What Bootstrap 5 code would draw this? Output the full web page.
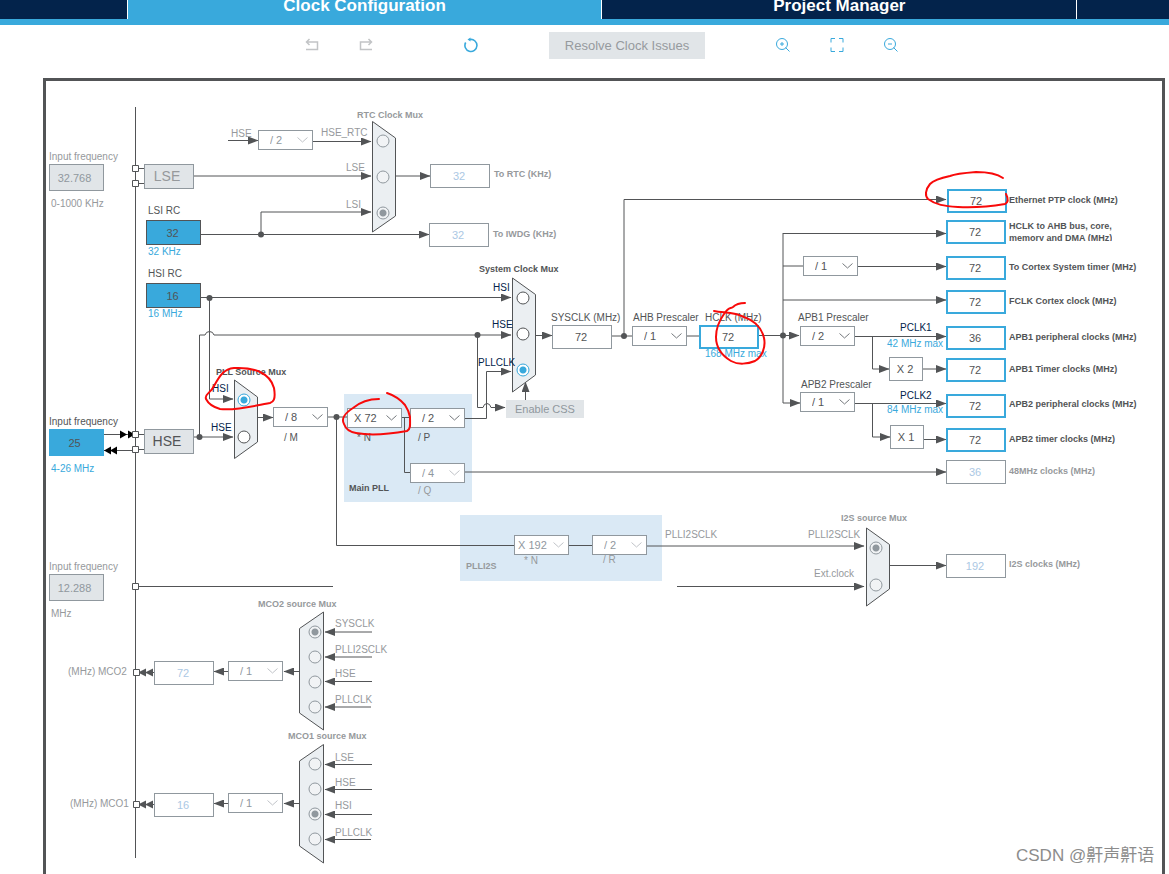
<!DOCTYPE html>
<html lang="en">
<head>
<meta charset="utf-8">
<meta name="viewport" content="width=device-width, initial-scale=1">
<title>Clock Configuration</title>
<link href="https://cdn.jsdelivr.net/npm/bootstrap@5.3.0/dist/css/bootstrap.min.css" rel="stylesheet">
<script src="https://cdn.jsdelivr.net/npm/bootstrap@5.3.0/dist/js/bootstrap.bundle.min.js"></script>
<style>
  :root { --sky:#39a9dc; --navy:#03234b; --ink:#525456; --edge:#90989e; --mist:#e1e5e8; --soft:#96999c; }
  body { font-family:"Liberation Sans",Arial,sans-serif; color:var(--ink); background:#fff; }
  .tabbar { height:25px; border-bottom:6px solid var(--sky); background:var(--navy); }
  .tabbar .tab { flex:475 1 0; border-right:1px solid #fff; color:#fff; font-size:17px; font-weight:700; line-height:12px; text-align:center; text-decoration:none; }
  .tabbar .tab-first { flex-grow:127; }
  .tabbar .tab-last { flex-grow:92; border-right:0; }
  .tabbar .tab.current { background:var(--sky); }
  .tools { height:53px; gap:51px; padding:7px 0 0 34px; }
  .tool { width:54px; height:26px; padding:0; border:0; background:none; color:var(--sky); display:flex; align-items:center; justify-content:center; }
  .tool:disabled { color:#c2c4c6; }
  .resolve { width:156px; height:27px; border:0; background:var(--mist); color:#969a9e; font-size:13px; line-height:27px; padding:0; }
  .frame { margin:0 4px 0 43px; border:3px solid var(--ink); border-bottom:0; overflow:hidden; }
  /* Canvas: every node carries its own place as --x / --y */
  .sheet, .ink { position:absolute; left:0; top:0; }
  .ink { pointer-events:none; }
  .at { position:absolute; left:calc((var(--x) - 46) * 1px); top:calc((var(--y) - 81) * 1px); }
  .cap { font-size:10px; line-height:12px; white-space:nowrap; color:var(--ink); }
  .bold { font-weight:700; font-size:9px; }
  .off { color:var(--soft); }
  .pin { color:var(--navy); }
  .lim { color:var(--sky); }
  .two { height:21px; overflow:hidden; }
  .val { width:60px; height:24px; padding:0 2px 0 0; border:1px solid var(--edge); border-radius:0; background:#fff; color:var(--ink); font-size:11px; line-height:22px; text-align:center; }
  .val.on { border:2px solid var(--sky); line-height:20px; }
  .val:disabled { color:#abc8e4; opacity:1; }
  .val.src { width:55px; height:25px; background:var(--sky); border-color:var(--ink); }
  .val.freq { width:55px; height:27px; padding-right:4px; }
  .val.freq.live { background:var(--sky); border-color:var(--sky); }
  .val.freq:disabled { background:var(--mist); border-color:var(--edge); color:#90989e; }
  .osc { width:50px; height:25px; padding:0 4px 0 0; border:1px solid var(--edge); background:var(--mist); font-size:14px; line-height:23px; text-align:center; }
  .mult { width:34px; height:24px; padding-right:2px; border:1px solid var(--edge); background:#fff; font-size:11px; line-height:22px; text-align:center; }
  .pick { width:55px; height:20px; padding:0 0 0 11px; border:1px solid var(--edge); border-radius:0; color:var(--ink); font-size:11px; line-height:18px; appearance:none;
    background:#fff url("data:image/svg+xml,%3Csvg xmlns='http://www.w3.org/2000/svg' width='11' height='6'%3E%3Cpath d='M.5.5 5.5 5 10.5.5' fill='none' stroke='%2375797d'/%3E%3C/svg%3E") no-repeat right 4px center; }
  .pick.wide { padding-left:6px; }
  .pick.wider { padding-left:3px; }
  .pick:disabled { opacity:1; color:#90989e; background-image:url("data:image/svg+xml,%3Csvg xmlns='http://www.w3.org/2000/svg' width='11' height='6'%3E%3Cpath d='M.5.5 5.5 5 10.5.5' fill='none' stroke='%23c0c4c8'/%3E%3C/svg%3E"); }
  .dial { width:13px; height:13px; margin:0; appearance:none; border:1px solid var(--ink); border-radius:50%; background:#fff; transform:translate(-50%,-50%); }
  .dial:checked { border-color:var(--sky); background:radial-gradient(circle,var(--sky) 3px,#fff 4px); }
  .dial:disabled { border-color:var(--edge); background:#f1f3f5; }
  .dial:disabled:checked { background:radial-gradient(circle,var(--edge) 3px,#f1f3f5 4px); }
  .css { width:78px; height:18px; padding:0; border:0; background:var(--mist); color:#90989e; font-size:11px; line-height:18px; }
  .credit { font:17px/24px "Liberation Sans","Noto Sans CJK SC",sans-serif; color:#8c8c8c; white-space:nowrap; }
</style>
</head>
<body class="d-flex flex-column min-vh-100">
<nav class="tabbar d-flex overflow-hidden">
  <span class="tab tab-first"></span>
  <a class="tab current" href="#clock">Clock Configuration</a>
  <a class="tab" href="#project">Project Manager</a>
  <span class="tab tab-last"></span>
</nav>
<div class="tools d-flex justify-content-center align-items-start">
  <div class="d-flex">
    <button class="tool" type="button" disabled><svg width="14" height="14" fill="none" stroke="currentColor" stroke-width="1.5"><path d="M1 11.500h11.500V4H2M4.500 1 1.500 4l3 3"/></svg></button>
    <button class="tool" type="button" disabled><svg width="14" height="14" fill="none" stroke="currentColor" stroke-width="1.5"><path d="M13 11.500H1.500V4H12M9.500 1 12.500 4 9.500 7"/></svg></button>
  </div>
  <button class="tool" type="button"><svg width="14" height="16" fill="none" stroke="currentColor" stroke-width="1.600"><path d="M1.700 5.500A6 6 0 1 0 6 2.500"/><path d="M3.500 2.500 6.500.500V4.500Z" fill="currentColor" stroke="none"/></svg></button>
  <button class="resolve" type="button" disabled>Resolve Clock Issues</button>
  <div class="d-flex">
    <button class="tool" type="button"><svg width="14" height="16" fill="none" stroke="currentColor"><circle cx="6" cy="7" r="5.500"/><path d="m9.500 10.500 4 4M4 7h4M6 5v4"/></svg></button>
    <button class="tool" type="button"><svg width="14" height="16" fill="none" stroke="currentColor"><path d="M1 5.500V1.500h4M9 1.500h4v4M13 10.500v4H9M5 14.500H1v-4"/></svg></button>
    <button class="tool" type="button"><svg width="14" height="16" fill="none" stroke="currentColor"><circle cx="6" cy="7" r="5.500"/><path d="m9.500 10.500 4 4M4 7h4"/></svg></button>
  </div>
</div>

<main class="frame position-relative flex-grow-1" id="clock">
<svg class="sheet" width="1116" height="793" viewBox="46 81 1116 793" fill="none" stroke="#525456">
  <defs>
    <marker id="arr" markerUnits="userSpaceOnUse" markerWidth="11" markerHeight="8" refX="10" refY="4" orient="auto"><path d="M0 0 10.500 4 0 8Z" fill="#525456" stroke="none"/></marker>
  </defs>
  <g fill="#dae9f5" stroke="none"><path d="M344 394h128v108H344zM460 515h202v66H460z"/></g>
  <path d="M135.500 107V858M139 168.500h5M139 183.500h5M139 434.500h5M139 449.500h5M139 586.500H333M104 434.500h31M104 450.500h31
    M209.500 298V399M336.500 417V545.500H514M569 545.500h23M328 417h19M402 417.500h8M404.500 417V472.500H410M612 336h20M687 336h12M783 336V233M783 266h20"/>
  <g marker-end="url(#arr)">
    <path d="M228 140.500H258"/><path d="M313 141.500H371"/><path d="M194 176H371"/><path d="M201 234.500H429"/><path d="M261 234V212H371"/><path d="M396 176H430"/>
    <path d="M201 297.500H511"/><path d="M209.500 298V399H233"/><path d="M194 437H233"/>
    <path d="M199.500 437V335H205Q206 331.500 209.500 331.500T214 335H511"/>
    <path d="M477.500 335V407.500H483Q484 403.500 487 403.500T491 407.500H505"/>
    <path d="M258 417.500H273"/><path d="M465 418.500H486.500V371.500H511"/><path d="M465 472H946"/><path d="M647 546H864"/>
    <path d="M536 335.500H552"/><path d="M624 336V199.500H946"/><path d="M525.500 400V382"/><path d="M759 335.500H799"/>
    <path d="M783 233.500H946"/><path d="M858 266.500H946"/><path d="M783 300H946"/><path d="M783 335V403H800"/>
    <path d="M855 336.500H946"/><path d="M872.500 337V369H889"/><path d="M923 369H946"/><path d="M855 403.500H946"/><path d="M872.500 403V437H890"/><path d="M924 439.500H946"/>
    <path d="M677 586.500H864"/><path d="M889 565.500H946"/>
    <path d="M299 671.500H284"/><path d="M228 671.500H214"/><path d="M299 803.500H284"/><path d="M228 803.500H214"/>
  </g>
  <g fill="#525456" stroke="none">
    <circle cx="261" cy="234.500" r="3"/><circle cx="209.500" cy="298" r="3"/><circle cx="199.500" cy="437" r="3"/><circle cx="477.500" cy="335" r="3"/><circle cx="336.500" cy="417" r="3"/><circle cx="624" cy="336" r="3"/><circle cx="783" cy="335.500" r="3"/>
    <path d="M138 672.500l8-4v8zM145 672.500l8-4v8zM138 804.500l8-4v8zM145 804.500l8-4v8z"/>
    <path fill="#000" d="M127 434.500l-7-4v8zM135 434.500l-7-4v8zM104 450.500l7-4v8zM110 450.500l7-4v8z"/>
  </g>
  <path d="M146 672.500h8M146 804.500h8"/>
  <path fill="#fff" d="M132.500 165.500h6v6h-6zM132.500 180.500h6v6h-6zM132.500 431.500h6v6h-6zM132.500 446.500h6v6h-6zM132.500 583.500h6v6h-6zM133.500 669.500h6v6h-6zM133.500 801.500h6v6h-6z"/>
  <path fill="#ebeff2" d="M372.500 121.500l23 16.500v78l-23 16zM512.500 278l23 16.500V375l-23 17zM234.500 380l23 17v45l-23 16.500zM866.500 528l23 16.500V589l-23 17zM323.500 612l-24 16.500V713l24 17zM323.500 744.500l-24 16.500V846l24 17z"/>
  <g marker-end="url(#arr)">
    <path d="M372 632H325"/><path d="M372 657H325"/><path d="M372 681.500H325"/><path d="M371 707H325"/>
    <path d="M372 764.500H325"/><path d="M372 789.500H325"/><path d="M372 814.500H325"/><path d="M371 839.500H325"/>
  </g>
</svg>

<!-- RTC branch and low-speed sources -->
<label class="at cap off" for="f1" style="--x:49;--y:151">Input frequency</label>
<input class="at val freq" id="f1" value="32.768" disabled style="--x:49;--y:164">
<span class="at cap off" style="--x:51;--y:198">0-1000 KHz</span>
<div class="at osc off" style="--x:144;--y:164">LSE</div>
<label class="at cap" for="lsi" style="--x:148;--y:205">LSI RC</label>
<input class="at val src" id="lsi" value="32" readonly style="--x:146;--y:220">
<span class="at cap lim" style="--x:148;--y:246">32 KHz</span>
<label class="at cap" for="hsi" style="--x:148;--y:268">HSI RC</label>
<input class="at val src" id="hsi" value="16" readonly style="--x:146;--y:283">
<span class="at cap lim" style="--x:148;--y:308">16 MHz</span>
<label class="at cap off" for="d1" style="--x:231;--y:128">HSE</label>
<select class="at pick" id="d1" disabled style="--x:258;--y:130"><option>/ 2</option></select>
<span class="at cap bold off" style="--x:357;--y:109">RTC Clock Mux</span>
<label class="at cap off" for="r1" style="--x:321;--y:127">HSE_RTC</label>
<label class="at cap off" for="r2" style="--x:346;--y:162">LSE</label>
<label class="at cap off" for="r3" style="--x:346;--y:199">LSI</label>
<input class="at dial" type="radio" name="rtc" id="r1" disabled style="--x:383;--y:141">
<input class="at dial" type="radio" name="rtc" id="r2" disabled style="--x:383;--y:177">
<input class="at dial" type="radio" name="rtc" id="r3" disabled checked style="--x:383;--y:213">
<input class="at val" id="o1" value="32" disabled style="--x:430;--y:164">
<label class="at cap bold off" for="o1" style="--x:494;--y:168">To RTC (KHz)</label>
<input class="at val" id="o2" value="32" disabled style="--x:429;--y:223">
<label class="at cap bold off" for="o2" style="--x:493;--y:228">To IWDG (KHz)</label>

<!-- System clock mux -->
<span class="at cap bold" style="--x:479;--y:263">System Clock Mux</span>
<label class="at cap pin" for="s1" style="--x:493;--y:282">HSI</label>
<label class="at cap pin" for="s2" style="--x:492;--y:319">HSE</label>
<label class="at cap pin" for="s3" style="--x:478;--y:357">PLLCLK</label>
<input class="at dial" type="radio" name="sys" id="s1" style="--x:523;--y:298">
<input class="at dial" type="radio" name="sys" id="s2" style="--x:523;--y:334">
<input class="at dial" type="radio" name="sys" id="s3" checked style="--x:523;--y:370">
<button class="at css" type="button" disabled style="--x:506;--y:400">Enable CSS</button>
<label class="at cap" for="sysclk" style="--x:551;--y:312">SYSCLK (MHz)</label>
<input class="at val" id="sysclk" value="72" readonly style="--x:552;--y:325">
<label class="at cap" for="ahb" style="--x:633;--y:312">AHB Prescaler</label>
<select class="at pick" id="ahb" style="--x:632;--y:326"><option>/ 1</option></select>
<label class="at cap" for="hclk" style="--x:705;--y:312">HCLK (MHz)</label>
<input class="at val on" id="hclk" value="72" style="--x:699;--y:325">
<span class="at cap lim" style="--x:705;--y:348">168 MHz max</span>

<!-- PLL source and main PLL -->
<span class="at cap bold" style="--x:216;--y:366">PLL Source Mux</span>
<label class="at cap pin" for="p1" style="--x:212;--y:383">HSI</label>
<label class="at cap pin" for="p2" style="--x:211;--y:422">HSE</label>
<input class="at dial" type="radio" name="pll" id="p1" checked style="--x:244;--y:400">
<input class="at dial" type="radio" name="pll" id="p2" style="--x:244;--y:437">
<label class="at cap" for="f2" style="--x:49;--y:416">Input frequency</label>
<input class="at val freq live" id="f2" value="25" style="--x:49;--y:429">
<span class="at cap lim" style="--x:51;--y:463">4-26 MHz</span>
<div class="at osc" style="--x:144;--y:429">HSE</div>
<select class="at pick" id="m" style="--x:273;--y:407"><option>/ 8</option></select>
<label class="at cap" for="m" style="--x:284;--y:432">/ M</label>
<select class="at pick wide" id="n" style="--x:347;--y:408"><option>X 72</option></select>
<label class="at cap" for="n" style="--x:357;--y:432">* N</label>
<select class="at pick" id="p" style="--x:410;--y:408"><option>/ 2</option></select>
<label class="at cap" for="p" style="--x:418;--y:432">/ P</label>
<select class="at pick" id="q" disabled style="--x:410;--y:463"><option>/ 4</option></select>
<label class="at cap off" for="q" style="--x:418;--y:485">/ Q</label>
<span class="at cap bold" style="--x:349;--y:482">Main PLL</span>

<!-- Bus prescalers -->
<select class="at pick" id="ctx" style="--x:803;--y:256"><option>/ 1</option></select>
<label class="at cap" for="apb1" style="--x:798;--y:312">APB1 Prescaler</label>
<select class="at pick" id="apb1" style="--x:800;--y:326"><option>/ 2</option></select>
<label class="at cap" for="apb2" style="--x:801;--y:379">APB2 Prescaler</label>
<select class="at pick" id="apb2" style="--x:800;--y:392"><option>/ 1</option></select>
<span class="at cap pin" style="--x:900;--y:322">PCLK1</span>
<span class="at cap lim" style="--x:887;--y:338">42 MHz max</span>
<div class="at mult" style="--x:889;--y:357">X 2</div>
<span class="at cap pin" style="--x:900;--y:390">PCLK2</span>
<span class="at cap lim" style="--x:887;--y:404">84 MHz max</span>
<div class="at mult" style="--x:890;--y:425">X 1</div>

<!-- Output clocks -->
<input class="at val on" id="c1" value="72" readonly style="--x:947;--y:189">
<label class="at cap bold" for="c1" style="--x:1009;--y:194">Ethernet PTP clock (MHz)</label>
<input class="at val on" id="c2" value="72" readonly style="--x:946;--y:220">
<label class="at cap bold two" for="c2" style="--x:1009;--y:220">HCLK to AHB bus, core,<br>memory and DMA (MHz)</label>
<input class="at val on" id="c3" value="72" readonly style="--x:946;--y:256">
<label class="at cap bold" for="c3" style="--x:1009;--y:261">To Cortex System timer (MHz)</label>
<input class="at val on" id="c4" value="72" readonly style="--x:946;--y:290">
<label class="at cap bold" for="c4" style="--x:1009;--y:295">FCLK Cortex clock (MHz)</label>
<input class="at val on" id="c5" value="36" readonly style="--x:946;--y:326">
<label class="at cap bold" for="c5" style="--x:1009;--y:331">APB1 peripheral clocks (MHz)</label>
<input class="at val on" id="c6" value="72" readonly style="--x:946;--y:358">
<label class="at cap bold" for="c6" style="--x:1009;--y:363">APB1 Timer clocks (MHz)</label>
<input class="at val on" id="c7" value="72" readonly style="--x:946;--y:394">
<label class="at cap bold" for="c7" style="--x:1009;--y:398">APB2 peripheral clocks (MHz)</label>
<input class="at val on" id="c8" value="72" readonly style="--x:946;--y:428">
<label class="at cap bold" for="c8" style="--x:1009;--y:433">APB2 timer clocks (MHz)</label>
<input class="at val" id="c9" value="36" disabled style="--x:946;--y:460">
<label class="at cap bold off" for="c9" style="--x:1009;--y:465">48MHz clocks (MHz)</label>

<!-- I2S PLL -->
<select class="at pick wider" id="in" disabled style="--x:514;--y:535"><option>X 192</option></select>
<label class="at cap off" for="in" style="--x:524;--y:555">* N</label>
<select class="at pick" id="ir" disabled style="--x:592;--y:535"><option>/ 2</option></select>
<label class="at cap off" for="ir" style="--x:603;--y:554">/ R</label>
<span class="at cap bold off" style="--x:466;--y:560">PLLI2S</span>
<span class="at cap off" style="--x:665;--y:529">PLLI2SCLK</span>
<span class="at cap bold off" style="--x:841;--y:512">I2S source Mux</span>
<label class="at cap off" for="i1" style="--x:808;--y:529">PLLI2SCLK</label>
<label class="at cap off" for="i2" style="--x:814;--y:568">Ext.clock</label>
<input class="at dial" type="radio" name="i2s" id="i1" disabled checked style="--x:876;--y:548">
<input class="at dial" type="radio" name="i2s" id="i2" disabled style="--x:876;--y:585">
<input class="at val" id="c10" value="192" disabled style="--x:946;--y:554">
<label class="at cap bold off" for="c10" style="--x:1009;--y:558">I2S clocks (MHz)</label>
<label class="at cap off" for="f3" style="--x:49;--y:561">Input frequency</label>
<input class="at val freq" id="f3" value="12.288" disabled style="--x:49;--y:574">
<span class="at cap off" style="--x:51;--y:608">MHz</span>

<!-- Clock outputs MCO2 and MCO1 -->
<span class="at cap bold off" style="--x:258;--y:598">MCO2 source Mux</span>
<label class="at cap off" for="a1" style="--x:335;--y:618">SYSCLK</label>
<label class="at cap off" for="a2" style="--x:335;--y:644">PLLI2SCLK</label>
<label class="at cap off" for="a3" style="--x:335;--y:668">HSE</label>
<label class="at cap off" for="a4" style="--x:335;--y:694">PLLCLK</label>
<input class="at dial" type="radio" name="mco2" id="a1" disabled checked style="--x:315;--y:632">
<input class="at dial" type="radio" name="mco2" id="a2" disabled style="--x:315;--y:657">
<input class="at dial" type="radio" name="mco2" id="a3" disabled style="--x:315;--y:682">
<input class="at dial" type="radio" name="mco2" id="a4" disabled style="--x:315;--y:707">
<select class="at pick" id="md2" disabled style="--x:228;--y:661"><option>/ 1</option></select>
<input class="at val" id="mo2" value="72" disabled style="--x:154;--y:661">
<label class="at cap off" for="mo2" style="--x:68;--y:666">(MHz) MCO2</label>
<span class="at cap bold off" style="--x:288;--y:730">MCO1 source Mux</span>
<label class="at cap off" for="b1" style="--x:335;--y:752">LSE</label>
<label class="at cap off" for="b2" style="--x:335;--y:777">HSE</label>
<label class="at cap off" for="b3" style="--x:335;--y:800">HSI</label>
<label class="at cap off" for="b4" style="--x:335;--y:827">PLLCLK</label>
<input class="at dial" type="radio" name="mco1" id="b1" disabled style="--x:315;--y:764">
<input class="at dial" type="radio" name="mco1" id="b2" disabled style="--x:315;--y:789">
<input class="at dial" type="radio" name="mco1" id="b3" disabled checked style="--x:315;--y:814">
<input class="at dial" type="radio" name="mco1" id="b4" disabled style="--x:315;--y:839">
<select class="at pick" id="md1" disabled style="--x:228;--y:793"><option>/ 1</option></select>
<input class="at val" id="mo1" value="16" disabled style="--x:154;--y:793">
<label class="at cap off" for="mo1" style="--x:70;--y:798">(MHz) MCO1</label>

<!-- Hand-drawn marks -->
<svg class="ink" width="1116" height="793" viewBox="46 81 1116 793" fill="none" stroke="#f80a0a" stroke-width="2" stroke-linecap="round" stroke-linejoin="round">
  <path d="M206 399C204 394 211 393 214 386C220 375 224 369 234 368C254 367 270 373 274 388C276 400 273 402 270 403C252 406 236 411 220 409C213 407 208 403 206 399Z"/>
  <path d="M379 399C368 399 359 403 353 408C345 413 341 419 344 424C346 430 350 432 356 433C372 436 390 434 407 431C411 429 410 424 410 417C409 411 407 408 405 405C400 399 393 395 387 393"/>
  <path d="M714 311C724 313 734 312 744 317C755 321 762 329 764 338C766 347 762 357 755 361C748 364 738 365 731 361C721 355 716 347 716 337C716 328 719 321 724 314C729 306 730 309 733 307C737 303 741 303 745 303"/>
  <path d="M1003 178C996 173 986 172 976 172C964 173 955 174 950 176C941 178 934 180 930 184C925 190 925 196 928 199C936 205 944 206 958 207C976 208 993 206 1005 204C1009 202 1008 198 1006 194"/>
</svg>
<span class="at credit" style="--x:1016;--y:844">CSDN @鼾声鼾语</span>
</main>
</body>
</html>
